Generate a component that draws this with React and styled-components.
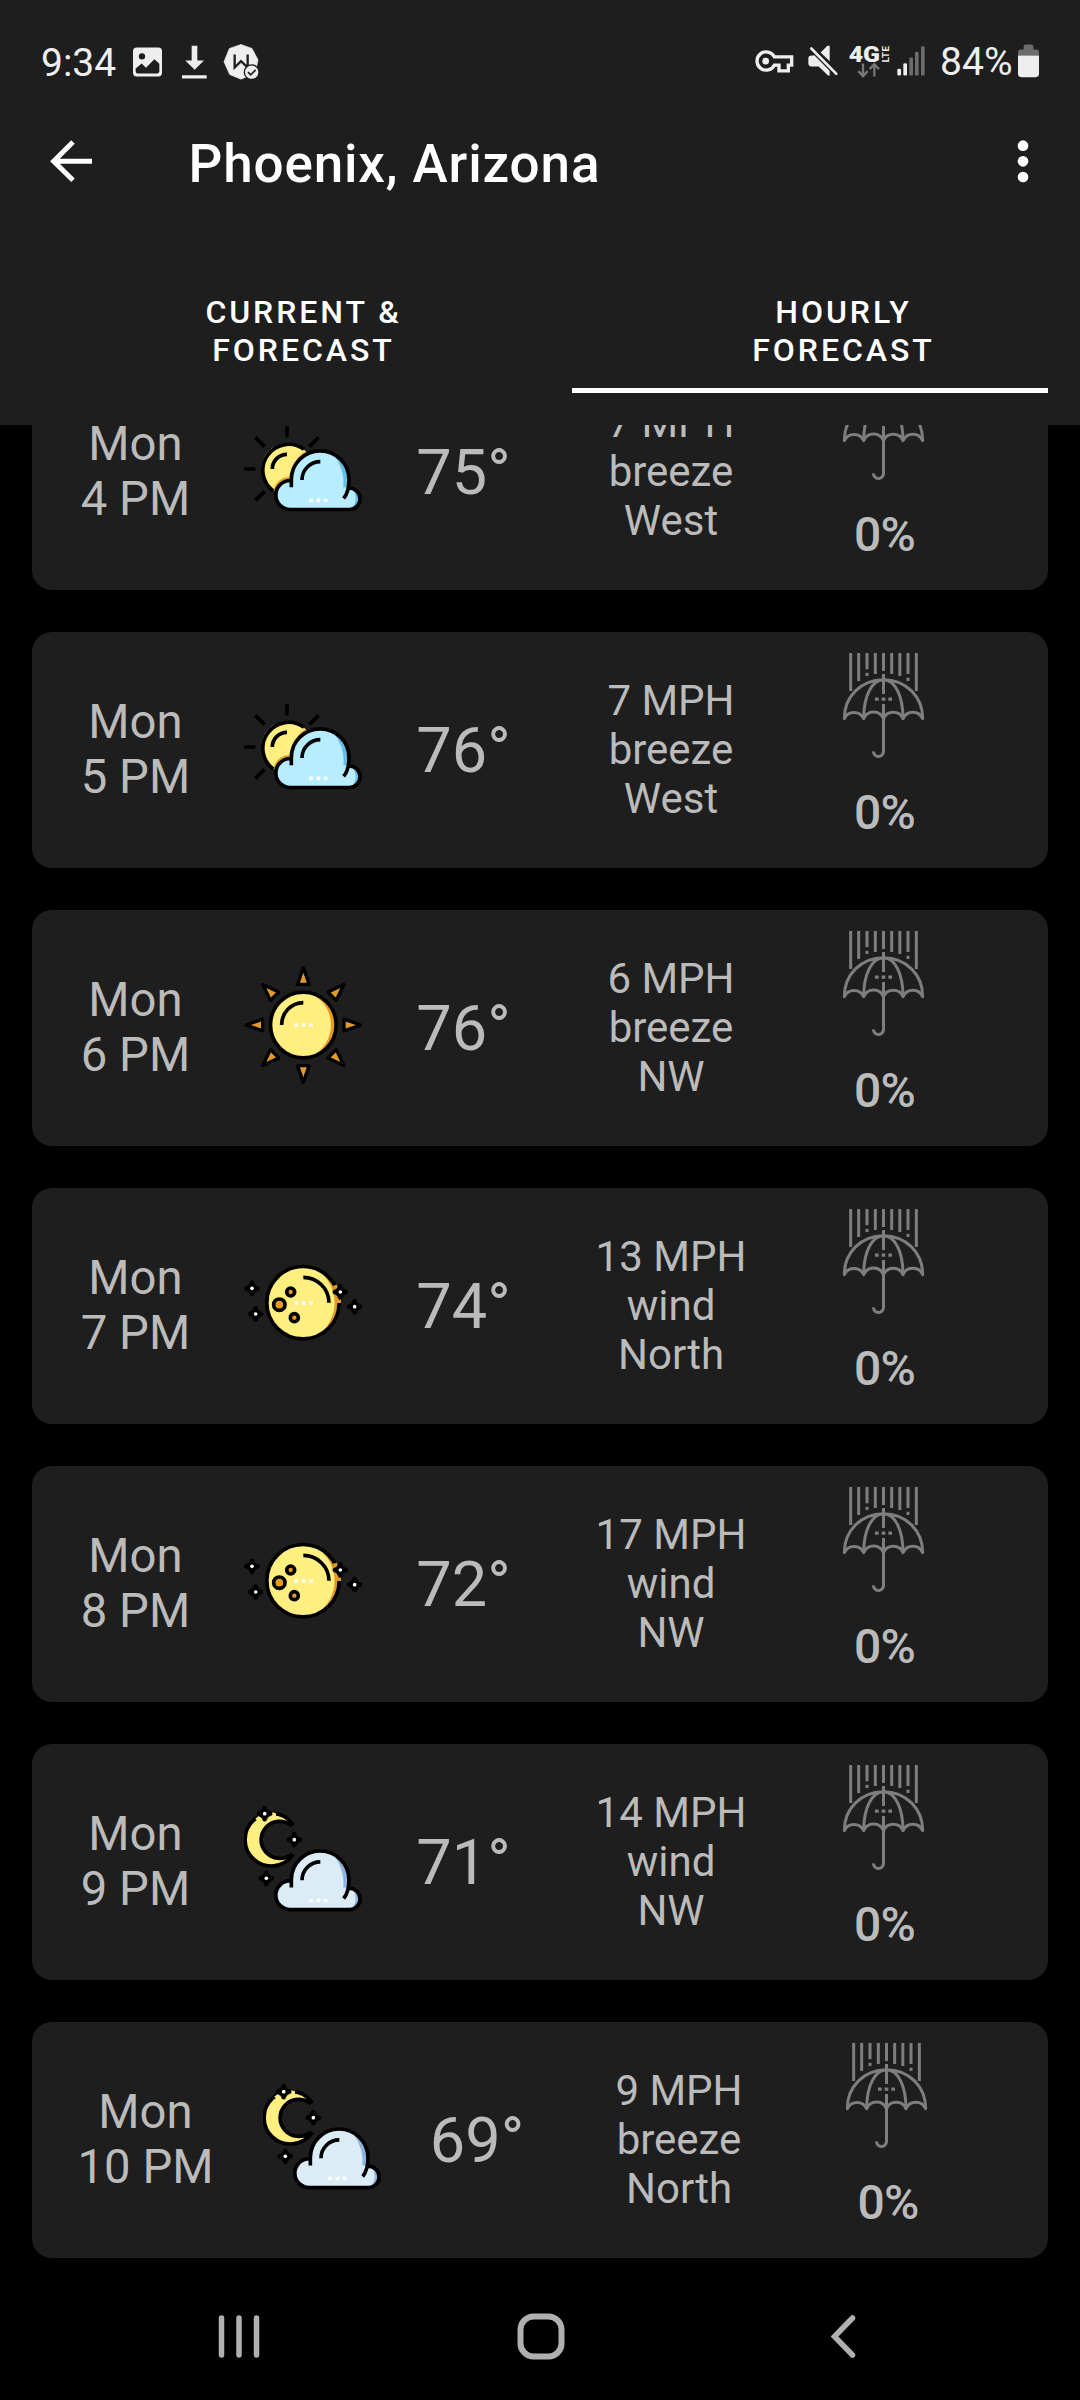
import React from 'react';
import styled, { createGlobalStyle } from 'styled-components';

const GlobalStyle = createGlobalStyle`
  * { box-sizing: border-box; }
  body { margin: 0; background: #000; font-family: Roboto, "Noto Sans", sans-serif; }
  svg { display: block; flex: none; }
`;

const Screen = styled.div`
  width: 1080px;
  height: 2400px;
  display: flex;
  flex-direction: column;
  overflow: hidden;
  background: #000;
`;

const Header = styled.header`
  flex: none;
  height: 425px;
  background: #1e1e1e;
  z-index: 1;
`;

const StatusBar = styled.div`
  height: 123px;
  padding: 0 41px 0 41px;
  display: flex;
  justify-content: space-between;
`;

const StatusGroup = styled.div`
  display: flex;
  align-items: center;
`;

const StatusText = styled.span`
  padding-top: 2px;
  font-size: 39px;
  line-height: 46px;
  color: #eee;
  white-space: nowrap;
`;

const StatusSlot = styled.span`
  margin-left: ${(p) => p.$gap}px;
`;

const Toolbar = styled.div`
  height: 76px;
  padding: 0 51.5px 0 50px;
  display: flex;
  align-items: center;
`;

const Title = styled.h1`
  flex: 1;
  margin: 0 0 0 96.5px;
  padding-top: 6px;
  font-size: 53px;
  line-height: 62px;
  font-weight: 500;
  letter-spacing: 0.85px;
  color: #fff;
`;

const Tabs = styled.nav`
  height: 226px;
  padding: 94px 0 0 32px;
  display: flex;
  overflow: hidden;
`;

const Tab = styled.div`
  flex: 0 0 540px;
  display: flex;
  flex-direction: column;
`;

const TabLabel = styled.span`
  padding-left: 3px;
  font-size: 32px;
  line-height: 38px;
  font-weight: 500;
  letter-spacing: 2.95px;
  text-align: center;
  color: #fff;
`;

const Indicator = styled.span`
  width: 476px;
  height: 5px;
  margin-top: 19px;
  background: #fff;
`;

const List = styled.main`
  flex: none;
  height: 1848px;
  padding: 0 32px;
  display: flex;
  flex-direction: column;
  gap: 42px;
  overflow: hidden;
  & > :first-child { margin-top: -71px; }
`;

const Card = styled.article`
  flex: none;
  height: 236px;
  border-radius: 20px;
  background: #1e1e1e;
  color: #bbb;
  display: grid;
  align-items: center;
  justify-items: center;
  text-align: center;
  grid-template-columns: ${(p) => (p.$wide ? '227px 125px 186px 218px 197px' : '205px 132px 189px 226px 198px')};
`;

const Time = styled.div`
  padding-left: ${(p) => (p.$wide ? 0 : 2)}px;
  font-size: 47.25px;
  line-height: 55px;
  white-space: nowrap;
`;

const IconSlot = styled.div`
  padding-bottom: 6px;
`;

const Temp = styled.div`
  padding-top: 2px;
  font-size: 63px;
  line-height: 74px;
`;

const Wind = styled.div`
  padding-bottom: 1px;
  font-size: 42px;
  line-height: 49px;
  white-space: nowrap;
`;

const Precip = styled.div`
  align-self: start;
  padding-top: 21px;
  display: flex;
  flex-direction: column;
  align-items: center;
  gap: 27px;
`;

const Chance = styled.span`
  padding-left: 3px;
  font-size: 48px;
  line-height: 55px;
  font-weight: 500;
  letter-spacing: -0.8px;
`;

const NavBar = styled.footer`
  flex: none;
  height: 127px;
  padding-left: 88px;
  display: grid;
  grid-template-columns: repeat(3, 302px);
  align-items: center;
  justify-items: center;
`;

const StatusIcon = ({ x, w, children }) => (
  <svg width={w / 3} height="36" viewBox={`${x} 70.5 ${w} 108`} fill="#eee" overflow="visible">{children}</svg>
);

const ImageIcon = () => (
  <StatusIcon x={399} w={87}>
    <path fillRule="evenodd" d="M410 81H475Q486 81 486 92V157Q486 168 475 168H410Q399 168 399 157V92Q399 81 410 81ZM407 144V152Q407 159 414 159H471Q478 159 478 152V130L463 116L438 142L425 129ZM426 98A9.500 9.500 0 1 0 426 117A9.500 9.500 0 1 0 426 98Z" />
  </StatusIcon>
);

const DownloadIcon = () => (
  <StatusIcon x={547} w={74}>
    <path d="M576 76H593V120H613L585 148L557 120H576ZM547 164H621V174H547Z" />
  </StatusIcon>
);

const BadgeIcon = () => (
  <StatusIcon x={673} w={105}>
    <path d="M724 72L757 84L775 118L769 147L755 163L724 176L690 162L673 124L689 84Z" stroke="#eee" strokeLinejoin="round" strokeWidth="2" />
    <path d="M705 102V141L724 122L744 141V102" fill="none" stroke="#1e1e1e" strokeWidth="7" />
    <circle cx="756" cy="155" r="22" stroke="#1e1e1e" strokeWidth="4" />
    <path d="M745 155L753 163L768 148" fill="none" stroke="#1e1e1e" strokeWidth="5" />
  </StatusIcon>
);

const KeyIcon = () => (
  <StatusIcon x={106} w={116}>
    <path d="M164 109A27.500 27.500 0 1 0 164 134H178V151H206V134H216V109Z" fill="none" stroke="#eee" strokeWidth="10" />
    <circle cx="138" cy="122" r="10" />
  </StatusIcon>
);

const MuteIcon = () => (
  <StatusIcon x={263} w={90}>
    <path d="M264 113Q264 107 270 106L283 104L328 149V165H323L295 138H273Q264 137 264 128ZM301 96L321 76H328V122Z" />
    <path d="M272 83L349 161" stroke="#1e1e1e" strokeWidth="15" />
    <path d="M273 84L348 160" stroke="#eee" strokeWidth="8" strokeLinecap="round" />
  </StatusIcon>
);

const NetworkIcon = () => (
  <StatusIcon x={388} w={120}>
    <text x="387" y="125" fontSize="64" fontWeight="900" fontFamily="Roboto" textLength="94" lengthAdjust="spacingAndGlyphs">4G</text>
    <text transform="translate(507 126) rotate(-90)" fontSize="29" fontWeight="700" fontFamily="Roboto" textLength="49" lengthAdjust="spacingAndGlyphs">LTE</text>
    <path d="M430 129V165M416 152L430 167L444 152M464 168V132M450 146L464 131L478 146" fill="none" stroke="#777" strokeWidth="7" />
  </StatusIcon>
);

const SignalIcon = () => (
  <StatusIcon x={531} w={83}>
    <rect x="532" y="145" width="11" height="20" rx="4" />
    <rect x="550" y="128" width="11" height="37" rx="4" />
    <g fill="#6c6c6c">
      <rect x="568" y="111" width="11" height="54" rx="4" />
      <rect x="585" y="94" width="11" height="71" rx="4" />
      <rect x="603" y="77" width="11" height="88" rx="4" />
    </g>
  </StatusIcon>
);

const BatteryIcon = () => (
  <StatusIcon x={894} w={63}>
    <path d="M894 105V96Q894 87 903 87H911V78Q911 72 918 72H933Q940 72 940 78V87H948Q957 87 957 96V105Z" fill="#6c6c6c" />
    <path d="M894 105H957V160Q957 170 947 170H904Q894 170 894 160Z" />
  </StatusIcon>
);

const BackArrow = () => (
  <svg width="42" height="44" viewBox="150 356 126 132" fill="none" stroke="#fff" strokeWidth="15">
    <path d="M276 422.500H163M219 365L161 422.500L219 480" />
  </svg>
);

const MoreIcon = () => (
  <svg width="12" height="44" viewBox="889 358 36 132" fill="#fff">
    <circle cx="907" cy="378" r="16" />
    <circle cx="907" cy="425" r="16" />
    <circle cx="907" cy="472" r="16" />
  </svg>
);

const Art = ({ top, children }) => (
  <svg width="118" height="118" viewBox={`42 ${top} 354 354`} fill="none" stroke="#000" strokeWidth="11">{children}</svg>
);

const Dots = ({ x, y }) => (
  <g fill="#fff" stroke="none" opacity="0.9">
    {[-22, 0, 22].map((d) => <rect key={d} x={x + d - 6} y={y - 5.500} width="12" height="11" rx="2" />)}
  </g>
);

const Star = ({ x, y }) => (
  <g transform={`translate(${x} ${y})`} stroke="none">
    <path d="M-4 -22H4Q6 -7 22 -4V4Q7 7 4 22H-4Q-7 7 -22 4V-4Q-7 -7 -4 -22Z" fill="#000" stroke="#000" strokeWidth="2" />
    <circle r="5.500" fill="#fff" />
  </g>
);

const Cloud = ({ color, shade }) => (
  <>
    <path d="M181 292.500A43.500 43.500 0 0 1 181 205.500A86.500 86.500 0 0 1 357 203L358 228A32.250 32.250 0 0 1 358 292.500Z" fill={color} stroke="none" />
    <path d="M311 127Q354 153 354 203L352 226H340Q346 178 311 127Z" fill={shade} stroke="none" />
    <path d="M365 229Q388 236 390 260Q388 286 363 290Q377 278 377 260Q377 244 365 229Z" fill={shade} stroke="none" />
    <path d="M184 226V203A86.500 86.500 0 0 1 357 203Q357 240 341 259M358 228A32.250 32.250 0 0 1 358 292.500H181A43.500 43.500 0 0 1 181 205.500M271 149A55 55 0 0 0 216 204" />
    <Dots x={265} y={265} />
  </>
);

const PartlyCloudy = () => (
  <Art top={-6}>
    <circle cx="171" cy="171" r="77" fill="#ffee80" stroke="none" />
    <path d="M228 117Q193 135 178 194Q140 198 130 235Q145 243 160 247L215 200Z" fill="#e49b23" stroke="none" />
    <path d="M222 112A77 77 0 1 0 130 237M171 127A44 44 0 0 0 127 171M171 43V76M76 76L104 104M42 171H76M76 265L104 238M238 104L266 76" />
    <Cloud color="#b8ecff" shade="#66bee6" />
  </Art>
);

const Sunny = () => (
  <Art top={48}>
    <circle cx="220" cy="225" r="98" fill="#e49b23" stroke="none" />
    <path d="M220 129A96 96 0 0 0 220 321Q239 320 250 315A103 103 0 0 0 250 135Q239 129 220 129Z" fill="#ffee80" stroke="none" />
    <circle cx="220" cy="225" r="98.500" />
    <path d="M220 158A66 66 0 0 0 155 225" />
    {[0, 45, 90, 135, 180, 225, 270, 315].map((a) => (
      <path key={a} d="M220 53L237.500 103H202.500Z" fill="#e49b23" strokeWidth="10" strokeLinejoin="round" transform={`rotate(${a} 220 225)`} />
    ))}
    <Dots x={221} y={225} />
  </Art>
);

const ClearNight = () => (
  <Art top={42}>
    <circle cx="219" cy="218" r="108" fill="#e49b23" stroke="none" />
    <path d="M219 112A106 106 0 0 0 219 324Q244 324 260 317A118 118 0 0 0 260 119Q243 112 219 112Z" fill="#ffee80" stroke="none" />
    <circle cx="219" cy="218" r="108.500" />
    <path d="M220 142A77 77 0 0 1 297 218" />
    <g fill="#e49b23">
      <circle cx="182" cy="186" r="12" />
      <circle cx="148" cy="224" r="17" />
      <circle cx="193" cy="263" r="12" />
    </g>
    <path d="M309 167L321 164L324 178L316 184L320 194L327 204L333 207V219H320Q316 190 309 167Z" fill="#e49b23" stroke="none" />
    <Star x={66} y={175} />
    <Star x={77} y={252} />
    <Star x={331} y={186} />
    <Star x={374} y={230} />
    <Dots x={221} y={219} />
  </Art>
);

const CloudyNight = () => (
  <Art top={30}>
    <path d="M187 101A79 79 0 1 0 187 197L182 194A55.500 55.500 0 1 1 182 105Z" fill="#ffee80" />
    <path d="M76 86L86 78L104 91L122 80L124 66L138 70L138 80L118 90H80Z" fill="#ffee80" stroke="none" />
    <Star x={104} y={71} />
    <Star x={193} y={149} />
    <Star x={109} y={265} />
    <g transform="translate(0 66.500)"><Cloud color="#dbecf6" shade="#8db4da" /></g>
  </Art>
);

const Umbrella = () => (
  <svg width="105" height="105" viewBox="33 39 315 315" fill="none" stroke="#7e7e7e" strokeWidth="9">
    <path d="M92 39V153M116 39V123M141 39V88M141 98V108M166 39V102M190.500 39V93M215 39V102M239.500 39V108M264 39V102M264 113V123M289 39V153" />
    <path d="M73 235C73 170 123 119 190.500 119S308 170 308 235M131 236C131 168 156 119 190.500 119S249 168 249 236" />
    <path d="M73 236A32 32 0 0 1 131 236A32 32 0 0 1 190.500 236A32 32 0 0 1 249 236A32 32 0 0 1 308 236" strokeLinejoin="round" strokeLinecap="round" />
    <path d="M190.500 102V162M190.500 192V335A15 15 0 0 1 160.500 334" />
    <path d="M165 177.500H176M185 177.500H196M205 177.500H216" strokeWidth="10" />
  </svg>
);

const icons = { partly: PartlyCloudy, sunny: Sunny, night: ClearNight, cloudyNight: CloudyNight };

const hours = [
  { time: '4 PM', icon: 'partly', temp: 75, wind: ['7 MPH', 'breeze', 'West'] },
  { time: '5 PM', icon: 'partly', temp: 76, wind: ['7 MPH', 'breeze', 'West'] },
  { time: '6 PM', icon: 'sunny', temp: 76, wind: ['6 MPH', 'breeze', 'NW'] },
  { time: '7 PM', icon: 'night', temp: 74, wind: ['13 MPH', 'wind', 'North'] },
  { time: '8 PM', icon: 'night', temp: 72, wind: ['17 MPH', 'wind', 'NW'] },
  { time: '9 PM', icon: 'cloudyNight', temp: 71, wind: ['14 MPH', 'wind', 'NW'] },
  { time: '10 PM', icon: 'cloudyNight', temp: 69, wind: ['9 MPH', 'breeze', 'North'] },
];

const HourCard = ({ time, icon, temp, wind }) => {
  const Icon = icons[icon];
  const wide = time.length > 4;
  return (
    <Card $wide={wide}>
      <Time $wide={wide}>Mon<br />{time}</Time>
      <IconSlot><Icon /></IconSlot>
      <Temp>{temp}°</Temp>
      <Wind>{wind[0]}<br />{wind[1]}<br />{wind[2]}</Wind>
      <Precip>
        <Umbrella />
        <Chance>0%</Chance>
      </Precip>
    </Card>
  );
};

export default function App() {
  return (
    <Screen>
      <GlobalStyle />
      <Header>
        <StatusBar>
          <StatusGroup>
            <StatusText>9:34</StatusText>
            <StatusSlot $gap={17}><ImageIcon /></StatusSlot>
            <StatusSlot $gap={20}><DownloadIcon /></StatusSlot>
            <StatusSlot $gap={17}><BadgeIcon /></StatusSlot>
          </StatusGroup>
          <StatusGroup>
            <KeyIcon />
            <StatusSlot $gap={13.5}><MuteIcon /></StatusSlot>
            <StatusSlot $gap={11.7}><NetworkIcon /></StatusSlot>
            <StatusSlot $gap={7.7}><SignalIcon /></StatusSlot>
            <StatusSlot $gap={15.5}><StatusText>84%</StatusText></StatusSlot>
            <StatusSlot $gap={5.5}><BatteryIcon /></StatusSlot>
          </StatusGroup>
        </StatusBar>
        <Toolbar>
          <BackArrow />
          <Title>Phoenix, Arizona</Title>
          <MoreIcon />
        </Toolbar>
        <Tabs>
          <Tab>
            <TabLabel>CURRENT &amp;<br />FORECAST</TabLabel>
          </Tab>
          <Tab>
            <TabLabel>HOURLY<br />FORECAST</TabLabel>
            <Indicator />
          </Tab>
        </Tabs>
      </Header>
      <List>
        {hours.map((h) => <HourCard key={h.time} {...h} />)}
      </List>
      <NavBar>
        <svg width="42" height="46" fill="none" stroke="#b0b0b0" strokeWidth="5.500" strokeLinecap="round">
          <path d="M3.500 4V41M21 4V41M38.500 4V41" />
        </svg>
        <svg width="48" height="48" fill="none" stroke="#b0b0b0" strokeWidth="6">
          <rect x="3.500" y="3.500" width="41" height="40" rx="13" />
        </svg>
        <svg width="26" height="46" fill="none" stroke="#b0b0b0" strokeWidth="5.500" strokeLinecap="round">
          <path d="M22.500 4L4.500 22.500L22.500 41" />
        </svg>
      </NavBar>
    </Screen>
  );
}
